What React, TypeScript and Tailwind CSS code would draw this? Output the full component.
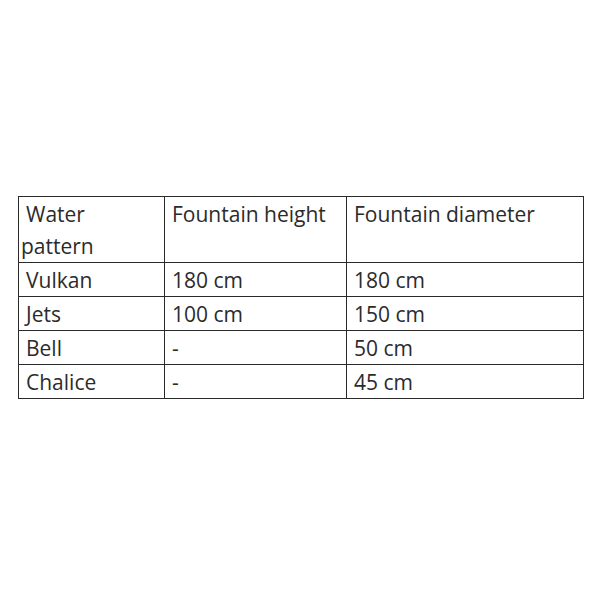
const rows = [
  ["Vulkan", "180 cm", "180 cm"],
  ["Jets", "100 cm", "150 cm"],
  ["Bell", "-", "50 cm"],
  ["Chalice", "-", "45 cm"],
];

const cell =
  "border border-[#2a2a2a] align-top pl-[2px] indent-[5px] leading-[32px] pt-[1px] pb-0";

export default function App() {
  return (
    <div className="w-[600px] h-[600px] bg-white pt-[196px] pl-[18px] font-['Open_Sans',sans-serif] text-[21px] text-[#2b2b2b]">
      <table className="border-collapse w-[565px] table-fixed">
        <colgroup>
          <col className="w-[146px]" />
          <col className="w-[182px]" />
          <col className="w-[237px]" />
        </colgroup>
        <tbody>
          <tr className="h-[66px]">
            <td className={cell + " leading-[32px]"}>
              Water
              <br />
              pattern
            </td>
            <td className={cell}>Fountain height</td>
            <td className={cell}>Fountain diameter</td>
          </tr>
          {rows.map((r) => (
            <tr key={r[0]} className="h-[34px]">
              {r.map((c, i) => (
                <td key={i} className={cell}>
                  {c}
                </td>
              ))}
            </tr>
          ))}
        </tbody>
      </table>
    </div>
  );
}
